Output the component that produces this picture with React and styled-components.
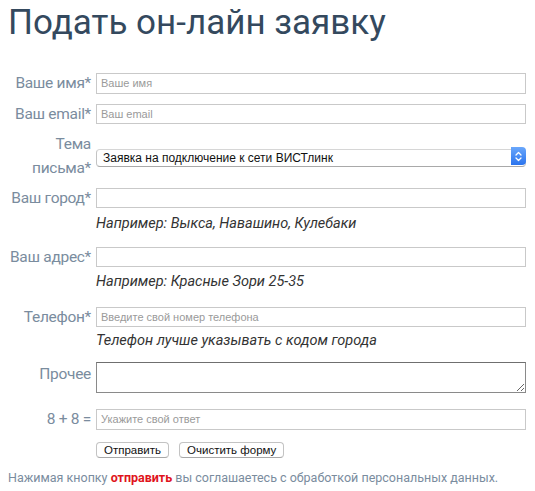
import React from 'react';
import styled, { createGlobalStyle } from 'styled-components';

const GlobalStyle = createGlobalStyle`
    body {
        margin: 0 8px;
        background: #ffffff;
        font-family: Roboto, 'Noto Sans', sans-serif;
    }
`;

const Page = styled.div`
    display: flex;
    flex-direction: column;
    width: 519px;
`;

const Title = styled.h1`
    margin: 3px 0 0 0;
    font-family: Roboto, sans-serif;
    font-weight: 400;
    font-size: 35px;
    line-height: 40px;
    color: #34495e;
`;

const Form = styled.form`
    display: flex;
    flex-direction: column;
    margin-top: 28px;
`;

const Row = styled.div`
    display: grid;
    grid-template-columns: 83px 430px;
    column-gap: 5px;
    align-items: ${(p) => (p.$top ? 'start' : 'center')};
    margin-top: ${(p) => p.$mt || 0}px;
`;

const Label = styled.label`
    text-align: right;
    white-space: ${(p) => (p.$wrap ? 'normal' : 'nowrap')};
    font-size: 15.5px;
    letter-spacing: -0.3px;
    line-height: 24px;
    color: #7a8c9e;
`;

const Input = styled.input`
    box-sizing: border-box;
    width: 100%;
    height: ${(p) => p.$h || 21}px;
    margin: 0;
    padding: 0 4px;
    border: 1px solid #c9c9c9;
    border-radius: 0;
    background: #fff;
    font-family: 'Liberation Sans', Arial, sans-serif;
    font-size: 11px;
    color: #222;
    outline: none;

    &::placeholder {
        color: #9a9a9a;
    }
`;

const SelectWrap = styled.div`
    position: relative;
    height: 18px;
`;

const Select = styled.select`
    appearance: none;
    -webkit-appearance: none;
    box-sizing: border-box;
    width: 100%;
    height: 18px;
    margin: 0;
    padding: 0 20px 0 6px;
    border: 1px solid #c4c4c4;
    border-top-color: #d6d6d6;
    border-bottom-color: #a9a9a9;
    border-radius: 4px;
    background: #fff;
    font-family: 'Liberation Sans', Arial, sans-serif;
    font-size: 12px;
    color: #111;
    outline: none;
`;

const Stepper = styled.span`
    position: absolute;
    top: 0;
    right: 0;
    width: 15px;
    height: 18px;
    display: flex;
    align-items: center;
    justify-content: center;
    border-radius: 0 4px 4px 0;
    background: linear-gradient(#6aa7fb, #2b74ee);
    pointer-events: none;
`;

const TextArea = styled.textarea`
    box-sizing: border-box;
    display: block;
    width: 100%;
    height: 31px;
    margin: 0;
    border: 1px solid #8a8a8a;
    border-top-color: #6f6f6f;
    background: #fff;
    resize: vertical;
    outline: none;
`;

const Hint = styled.div`
    grid-column: 2;
    font-style: italic;
    font-size: 14.5px;
    line-height: 20px;
    color: #333;
`;

const Buttons = styled.div`
    grid-column: 2;
    display: flex;
    gap: 10px;
`;

const Button = styled.button`
    box-sizing: border-box;
    height: 16px;
    padding: 0 7px;
    border: 1px solid #c3c3c3;
    border-bottom-color: #a8a8a8;
    border-radius: 4px;
    background: #fff;
    font-family: 'Liberation Sans', Arial, sans-serif;
    font-size: 11.5px;
    line-height: 14px;
    color: #111;
`;

const Note = styled.p`
    margin: 11px 0 0 0;
    font-size: 12.5px;
    line-height: 18px;
    color: #7a8c9e;

    strong {
        color: #e0141c;
        font-weight: 700;
    }
`;

const Spacer = styled.span``;

const App = () => {
    return (
        <Page>
            <GlobalStyle />
            <Title>Подать он-лайн заявку</Title>
            <Form onSubmit={(e) => e.preventDefault()}>
                <Row>
                    <Label>Ваше имя*</Label>
                    <Input placeholder="Ваше имя" />
                </Row>
                <Row $mt={7}>
                    <Label>Ваш email*</Label>
                    <Input placeholder="Ваш email" $h={20} />
                </Row>
                <Row $mt={6}>
                    <Label $wrap>Тема письма*</Label>
                    <SelectWrap>
                        <Select defaultValue="connect">
                            <option value="connect">Заявка на подключение к сети ВИСТлинк</option>
                        </Select>
                        <Stepper>
                            <svg width="7" height="11" viewBox="0 0 7 11" fill="none" stroke="#fff" strokeWidth="1.3" strokeLinecap="round" strokeLinejoin="round">
                                <path d="M1 4 L3.5 1.5 L6 4" />
                                <path d="M1 7 L3.5 9.5 L6 7" />
                            </svg>
                        </Stepper>
                    </SelectWrap>
                </Row>
                <Row $mt={6}>
                    <Label>Ваш город*</Label>
                    <Input $h={20} />
                </Row>
                <Row $mt={4}>
                    <Spacer />
                    <Hint>Например: Выкса, Навашино, Кулебаки</Hint>
                </Row>
                <Row $mt={11}>
                    <Label>Ваш адрес*</Label>
                    <Input $h={20} />
                </Row>
                <Row $mt={3}>
                    <Spacer />
                    <Hint>Например: Красные Зори 25-35</Hint>
                </Row>
                <Row $mt={13}>
                    <Label>Телефон*</Label>
                    <Input placeholder="Введите свой номер телефона" $h={20} />
                </Row>
                <Row $mt={2}>
                    <Spacer />
                    <Hint>Телефон лучше указывать с кодом города</Hint>
                </Row>
                <Row $mt={11} $top>
                    <Label>Прочее</Label>
                    <TextArea />
                </Row>
                <Row $mt={14}>
                    <Label>8 + 8 =</Label>
                    <Input placeholder="Укажите свой ответ" />
                </Row>
                <Row $mt={11}>
                    <Buttons>
                        <Button type="submit">Отправить</Button>
                        <Button type="reset">Очистить форму</Button>
                    </Buttons>
                </Row>
            </Form>
            <Note>
                Нажимая кнопку <strong>отправить</strong> вы соглашаетесь с обработкой персональных данных.
            </Note>
        </Page>
    );
};

export default App;
